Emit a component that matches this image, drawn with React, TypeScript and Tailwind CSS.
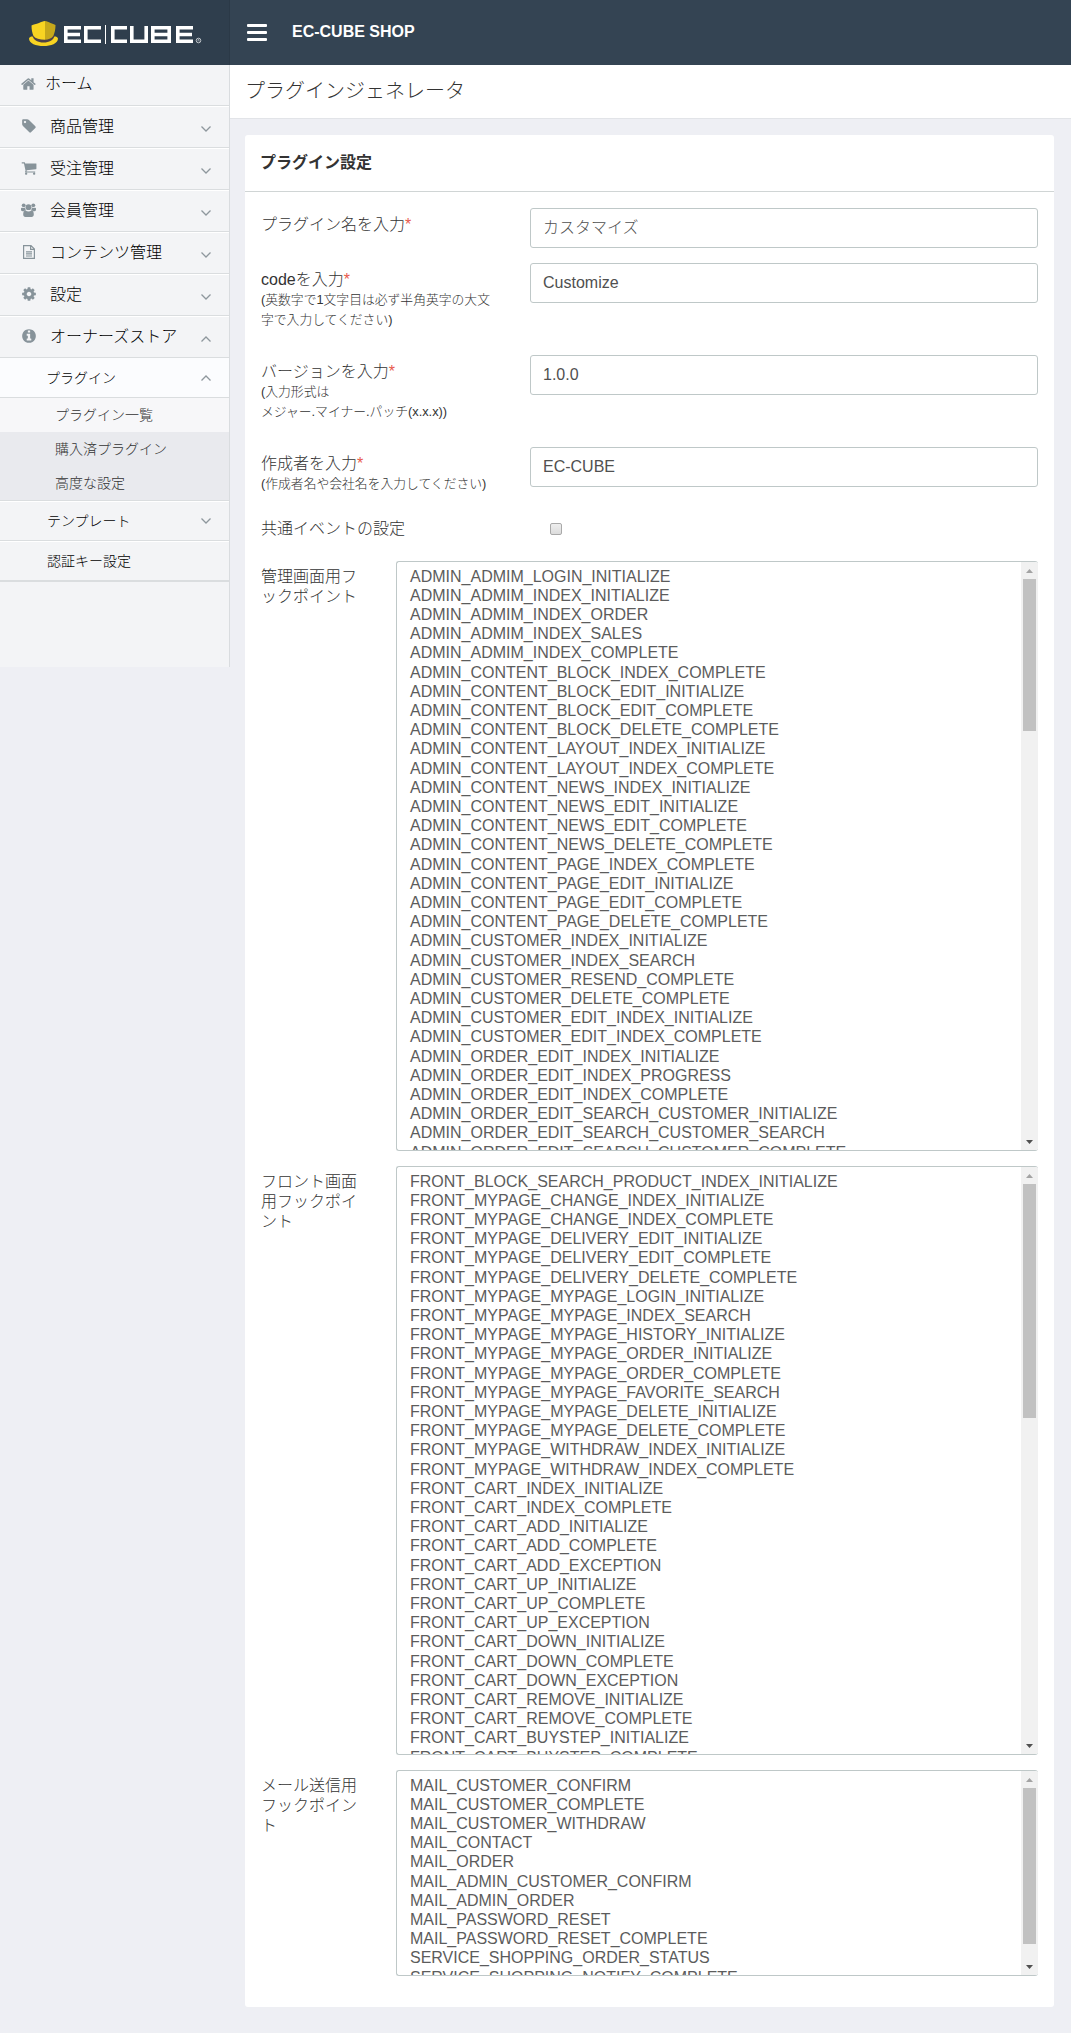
import React from "react";

const ADMIN = `ADMIN_ADMIM_LOGIN_INITIALIZE
ADMIN_ADMIM_INDEX_INITIALIZE
ADMIN_ADMIM_INDEX_ORDER
ADMIN_ADMIM_INDEX_SALES
ADMIN_ADMIM_INDEX_COMPLETE
ADMIN_CONTENT_BLOCK_INDEX_COMPLETE
ADMIN_CONTENT_BLOCK_EDIT_INITIALIZE
ADMIN_CONTENT_BLOCK_EDIT_COMPLETE
ADMIN_CONTENT_BLOCK_DELETE_COMPLETE
ADMIN_CONTENT_LAYOUT_INDEX_INITIALIZE
ADMIN_CONTENT_LAYOUT_INDEX_COMPLETE
ADMIN_CONTENT_NEWS_INDEX_INITIALIZE
ADMIN_CONTENT_NEWS_EDIT_INITIALIZE
ADMIN_CONTENT_NEWS_EDIT_COMPLETE
ADMIN_CONTENT_NEWS_DELETE_COMPLETE
ADMIN_CONTENT_PAGE_INDEX_COMPLETE
ADMIN_CONTENT_PAGE_EDIT_INITIALIZE
ADMIN_CONTENT_PAGE_EDIT_COMPLETE
ADMIN_CONTENT_PAGE_DELETE_COMPLETE
ADMIN_CUSTOMER_INDEX_INITIALIZE
ADMIN_CUSTOMER_INDEX_SEARCH
ADMIN_CUSTOMER_RESEND_COMPLETE
ADMIN_CUSTOMER_DELETE_COMPLETE
ADMIN_CUSTOMER_EDIT_INDEX_INITIALIZE
ADMIN_CUSTOMER_EDIT_INDEX_COMPLETE
ADMIN_ORDER_EDIT_INDEX_INITIALIZE
ADMIN_ORDER_EDIT_INDEX_PROGRESS
ADMIN_ORDER_EDIT_INDEX_COMPLETE
ADMIN_ORDER_EDIT_SEARCH_CUSTOMER_INITIALIZE
ADMIN_ORDER_EDIT_SEARCH_CUSTOMER_SEARCH
ADMIN_ORDER_EDIT_SEARCH_CUSTOMER_COMPLETE`.split("\n");

const FRONT = `FRONT_BLOCK_SEARCH_PRODUCT_INDEX_INITIALIZE
FRONT_MYPAGE_CHANGE_INDEX_INITIALIZE
FRONT_MYPAGE_CHANGE_INDEX_COMPLETE
FRONT_MYPAGE_DELIVERY_EDIT_INITIALIZE
FRONT_MYPAGE_DELIVERY_EDIT_COMPLETE
FRONT_MYPAGE_DELIVERY_DELETE_COMPLETE
FRONT_MYPAGE_MYPAGE_LOGIN_INITIALIZE
FRONT_MYPAGE_MYPAGE_INDEX_SEARCH
FRONT_MYPAGE_MYPAGE_HISTORY_INITIALIZE
FRONT_MYPAGE_MYPAGE_ORDER_INITIALIZE
FRONT_MYPAGE_MYPAGE_ORDER_COMPLETE
FRONT_MYPAGE_MYPAGE_FAVORITE_SEARCH
FRONT_MYPAGE_MYPAGE_DELETE_INITIALIZE
FRONT_MYPAGE_MYPAGE_DELETE_COMPLETE
FRONT_MYPAGE_WITHDRAW_INDEX_INITIALIZE
FRONT_MYPAGE_WITHDRAW_INDEX_COMPLETE
FRONT_CART_INDEX_INITIALIZE
FRONT_CART_INDEX_COMPLETE
FRONT_CART_ADD_INITIALIZE
FRONT_CART_ADD_COMPLETE
FRONT_CART_ADD_EXCEPTION
FRONT_CART_UP_INITIALIZE
FRONT_CART_UP_COMPLETE
FRONT_CART_UP_EXCEPTION
FRONT_CART_DOWN_INITIALIZE
FRONT_CART_DOWN_COMPLETE
FRONT_CART_DOWN_EXCEPTION
FRONT_CART_REMOVE_INITIALIZE
FRONT_CART_REMOVE_COMPLETE
FRONT_CART_BUYSTEP_INITIALIZE
FRONT_CART_BUYSTEP_COMPLETE`.split("\n");

const MAIL = `MAIL_CUSTOMER_CONFIRM
MAIL_CUSTOMER_COMPLETE
MAIL_CUSTOMER_WITHDRAW
MAIL_CONTACT
MAIL_ORDER
MAIL_ADMIN_CUSTOMER_CONFIRM
MAIL_ADMIN_ORDER
MAIL_PASSWORD_RESET
MAIL_PASSWORD_RESET_COMPLETE
SERVICE_SHOPPING_ORDER_STATUS
SERVICE_SHOPPING_NOTIFY_COMPLETE`.split("\n");

const HOME =
  "M1408 992v480q0 26-19 45t-45 19h-384v-384h-256v384h-384q-26 0-45-19t-19-45v-480q0-1 .5-3t.5-3l575-474 575 474q1 2 1 6zm223-69l-62 74q-8 9-21 11h-3q-13 0-21-7l-692-577-692 577q-12 8-24 7-13-2-21-11l-62-74q-8-10-7-23.5t11-21.5l719-599q32-26 76-26t76 26l244 204v-195q0-14 9-23t23-9h192q14 0 23 9t9 23v408l219 182q10 8 11 21.5t-7 23.5z";
const TAG =
  "M576 448q0-53-37.5-90.5t-90.5-37.5-90.5 37.5-37.5 90.5 37.5 90.5 90.5 37.5 90.5-37.5 37.5-90.5zm1067 576q0 53-37 90l-491 492q-39 37-91 37-53 0-90-37l-715-716q-38-37-64.5-101t-26.5-117v-416q0-52 38-90t90-38h416q53 0 117 26.5t102 64.5l715 714q37 39 37 91z";
const CART =
  "M704 1536q0 52-38 90t-90 38-90-38-38-90 38-90 90-38 90 38 38 90zm896 0q0 52-38 90t-90 38-90-38-38-90 38-90 90-38 90 38 38 90zm128-1088v512q0 24-16.5 42.5t-40.5 21.5l-1044 122q13 60 13 70 0 16-24 64h920q26 0 45 19t19 45-19 45-45 19h-1024q-26 0-45-19t-19-45q0-11 8-31.5t16-36 21.5-40 15.5-29.5l-177-823h-204q-26 0-45-19t-19-45 19-45 45-19h256q16 0 28.5 6.5t19.5 15.5 13 24.5 8 26 5.5 29.5 4.5 26h1201q26 0 45 19t19 45z";
const COG =
  "M1152 896q0-106-75-181t-181-75-181 75-75 181 75 181 181 75 181-75 75-181zm512-109v222q0 12-8 23t-20 13l-185 28q-19 54-39 91 35 50 107 138 10 12 10 25t-9 23q-27 37-99 108t-94 71q-12 0-26-9l-138-108q-44 23-91 38-16 136-29 186-7 28-36 28h-222q-14 0-24.5-8.500t-11.500-21.500l-28-184q-49-16-90-37l-141 107q-10 9-25 9-14 0-25-11-126-114-165-168-7-10-7-23 0-12 8-23 15-21 51-66.500t54-70.500q-27-50-41-99l-183-27q-13-2-21-12.500t-8-23.500v-222q0-12 8-23t19-13l186-28q14-46 39-92-40-57-107-138-10-12-10-24 0-10 9-23 26-36 98.500-107.500t94.500-71.500q13 0 26 10l138 107q44-23 91-38 16-136 29-186 7-28 36-28h222q14 0 24.500 8.500t11.500 21.500l28 184q49 16 90 37l142-107q9-9 24-9 13 0 25 10 129 119 165 170 7 8 7 22 0 12-8 23-15 21-51 66.500t-54 70.500q26 50 41 98l183 28q13 2 21 12.500t8 23.500z";
const INFO =
  "M1152 1376v-160q0-14-9-23t-23-9h-96v-512q0-14-9-23t-23-9h-320q-14 0-23 9t-9 23v160q0 14 9 23t23 9h96v320h-96q-14 0-23 9t-9 23v160q0 14 9 23t23 9h448q14 0 23-9t9-23zm-128-896v-160q0-14-9-23t-23-9h-192q-14 0-23 9t-9 23v160q0 14 9 23t23 9h192q14 0 23-9t9-23zm640 416q0 209-103 385.500t-279.500 279.500-385.500 103-385.500-103-279.500-279.500-103-385.500 103-385.500 279.500-279.500 385.500-103 385.500 103 279.500 279.500 103 385.500z";

function Glyph({ d }: { d: string }) {
  return (
    <svg width="16" height="16" viewBox="0 0 1792 1792" fill="currentColor" className="shrink-0">
      <path d={d} />
    </svg>
  );
}

function Logo() {
  return (
    <svg width="174" height="28" viewBox="0 0 174 28" className="shrink-0">
      <path d="M0 18.500C1 16.500 3 16 5 17c5 5 13 5 19 0 2-1 4-.5 5 1.500C29 23.500 22 26 14.500 26S0 23.500 0 18.500z" fill="#f8d422" />
      <path d="M3.500 15.500C4 20 9 22.500 14.500 22.500s10.500-2.500 11-7l-1-1.500H4.500z" fill="#4d4148" />
      <path d="M16 1c-2 0-4 1.200-6 2-3 1-5.500 1.500-7.500 2.500 0 4 .8 7.500 2 10.500 2 2.500 6 3.800 11.500 3.800z" fill="#f8d422" />
      <path d="M16 1c2 0 3.500 1.200 5.500 2 2 .8 3.500 1.200 5 2 0 4-.8 8-2.200 11-2 2.500-5 3.800-8.300 3.800z" fill="#c6a81b" />
      <g fill="none" stroke="#fff" strokeWidth="3.600">
        <path d="M52 7.800H36.800V21.200H52M36.800 14.500H51" />
        <path d="M72 7.800H56.800V21.200H72" />
        <path d="M98 7.800H83.800V21.200H98" />
        <path d="M102.800 6V21.200H117.200V6" />
        <path d="M123.800 6V23M122 7.800H140.200V21.200H122M123.800 14.500H140.200" />
        <path d="M164 7.800H148.800V21.200H164M148.800 14.500H163" />
      </g>
      <path d="M76.500 5V24" stroke="#fff" strokeWidth="1" />
      <circle cx="169.500" cy="20.500" r="2.300" fill="none" stroke="#dfe3e6" strokeWidth=".8" />
      <path d="M169 21.500v-2h1v1l.5 1" fill="none" stroke="#dfe3e6" strokeWidth=".5" />
    </svg>
  );
}

function UsersIcon() {
  return (
    <svg width="15" height="14" viewBox="0 0 15 14" fill="currentColor">
      <circle cx="2.700" cy="2.300" r="1.900" />
      <circle cx="12.300" cy="2.300" r="1.900" />
      <circle cx="7.500" cy="4.200" r="2.900" />
      <path d="M0 5.500C0 4.700.7 4.500 1.500 4.800c1 .4 1.800.3 2.600-.2 0 1 .3 1.900.9 2.600-1 0-1.800.4-2.300 1H1.500C.5 8.200 0 7.500 0 6.800zM15 5.500c0-.8-.7-1-1.500-.7-1 .4-1.800.3-2.600-.2 0 1-.3 1.900-.9 2.600 1 0 1.800.4 2.300 1h1.200c1 0 1.500-.7 1.500-1.400zM2.200 11.500c0-2.300.8-3.900 2.300-3.900 2 1.200 4 1.200 6 0 1.500 0 2.300 1.600 2.300 3.900 0 1.500-.8 2.500-2.200 2.500H4.400c-1.400 0-2.200-1-2.200-2.500z" />
    </svg>
  );
}

function FileIcon() {
  return (
    <svg width="12" height="14" viewBox="0 0 12 14" fill="none" stroke="currentColor" strokeWidth="1.200">
      <path d="M.6.6H8L11.400 4v9.400H.6zM7.600.6v3.800h3.800M3 6.800h6M3 8.900h6M3 11h6" />
    </svg>
  );
}

function Chevron({ up = false }: { up?: boolean }) {
  return (
    <svg width="10" height="6" viewBox="0 0 10 6" fill="none" stroke="#8e979d" strokeWidth="1.300" className={up ? "rotate-180" : ""}>
      <path d="M.5.5L5 5 9.500.5" />
    </svg>
  );
}

type NavProps = { icon: React.ReactNode; label: string; chevron?: "up" | "down" };

function NavItem({ icon, label, chevron }: NavProps) {
  return (
    <li
      className={`flex items-center border-b border-b-[#dadddf] pl-[21px] pr-[18px] text-black ${
        chevron ? "h-[42px] border-t border-t-white" : "h-[41px]"
      }`}
    >
      <span className="-mt-[2px] flex w-[15px] justify-center text-[#87939a]">{icon}</span>
      <span className={chevron ? "-mt-px ml-[14px]" : "-mt-[2px] ml-[9px]"}>{label}</span>
      {chevron && (
        <span className="ml-auto mt-[3px]">
          <Chevron up={chevron === "up"} />
        </span>
      )}
    </li>
  );
}

function Field({ label, note, value, height }: { label: string; note?: React.ReactNode; value: string; height: string }) {
  return (
    <div className={`flex ${height}`}>
      <div className="w-[269px] shrink-0 pt-[7px] leading-[20px]">
        <div>
          {label}
          <span className="text-[#e85a4c]">*</span>
        </div>
        {note && <div className="w-[234px] text-[12.800px] leading-[20px]">{note}</div>}
      </div>
      <div className="flex h-10 flex-1 items-center rounded-[3px] border border-[#bfc8c8] px-3 text-[#505050]">{value}</div>
    </div>
  );
}

function ListBox({ label, items, height, thumb }: { label: string; items: string[]; height: string; thumb: string }) {
  return (
    <div className="mb-[15px] flex">
      <div className="w-[135px] shrink-0 pr-[38px] pt-[6px] leading-[20px]">{label}</div>
      <div className={`flex flex-1 overflow-hidden rounded-[3px] border border-r-0 border-[#bfc8c8] ${height}`}>
        <ul className="flex-1 overflow-hidden pl-[13px] pt-[4.600px] leading-[19.200px] text-[#5c5c5c]">
          {items.map((t) => (
            <li key={t}>{t}</li>
          ))}
        </ul>
        <div className="flex w-[17px] flex-col items-center bg-[#f1f1f1]">
          <span className="flex h-[17px] shrink-0 items-center justify-center">
            <svg width="7" height="4" viewBox="0 0 7 4"><path d="M0 4L3.500 0 7 4z" fill="#a3a3a3" /></svg>
          </span>
          <span className={`w-[13px] shrink-0 bg-[#c1c1c1] ${thumb}`} />
          <span className="mt-auto flex h-[17px] shrink-0 items-center justify-center">
            <svg width="7" height="4" viewBox="0 0 7 4"><path d="M0 0L3.500 4 7 0z" fill="#505050" /></svg>
          </span>
        </div>
      </div>
    </div>
  );
}

export default function App() {
  return (
    <div className="min-h-[2033px] bg-[#eeeff4] font-['Liberation_Sans','Noto_Sans_CJK_JP',sans-serif] text-[16px] font-light leading-[20px] text-[#333]">
      <header className="flex h-[65px] bg-[#344453]">
        <div className="w-[230px] border-r border-[#2b3947] bg-[#2f3e4d] pl-[29px] pt-5">
          <Logo />
        </div>
        <div className="flex flex-1 pl-[17px]">
          <div className="mt-[24px] flex h-[17px] w-5 flex-col justify-between">
            <span className="h-[3px] rounded-[1px] bg-white" />
            <span className="h-[3px] rounded-[1px] bg-white" />
            <span className="h-[3px] rounded-[1px] bg-white" />
          </div>
          <div className="ml-[25px] mt-[22px] font-bold text-white">EC-CUBE SHOP</div>
        </div>
      </header>
      <div className="flex items-start">
        <nav className="h-[602px] w-[230px] shrink-0 border-r border-[#d9dcdf] bg-[#f3f4f6]">
          <ul>
            <NavItem icon={<Glyph d={HOME} />} label="ホーム" />
            <NavItem icon={<Glyph d={TAG} />} label="商品管理" chevron="down" />
            <NavItem icon={<Glyph d={CART} />} label="受注管理" chevron="down" />
            <NavItem icon={<UsersIcon />} label="会員管理" chevron="down" />
            <NavItem icon={<FileIcon />} label="コンテンツ管理" chevron="down" />
            <NavItem icon={<Glyph d={COG} />} label="設定" chevron="down" />
            <NavItem icon={<Glyph d={INFO} />} label="オーナーズストア" chevron="up" />
          </ul>
          <div className="text-[14px] text-black">
            <div className="flex h-10 items-center justify-between border-b border-[#dadddf] bg-[#fbfcfe] pl-[46px] pr-[18px]">
              プラグイン
              <Chevron up />
            </div>
            <ul className="border-b border-[#dadddf] text-[#333]">
              <li className="flex h-[34px] items-center bg-[#f7f7f9] pl-[55px]">プラグイン一覧</li>
              <li className="flex h-[34px] items-center bg-[#e9eaee] pl-[55px]">購入済プラグイン</li>
              <li className="flex h-[34px] items-center bg-[#e9eaee] pl-[55px]">高度な設定</li>
            </ul>
            <div className="flex h-10 items-center justify-between border-t border-b border-t-white border-b-[#dadddf] pl-[47px] pr-[18px]">
              テンプレート
              <Chevron />
            </div>
            <div className="flex h-[41px] items-center border-t border-b-2 border-t-white border-b-[#dadddf] pl-[47px]">認証キー設定</div>
          </div>
        </nav>
        <main className="flex-1">
          <h1 className="flex h-[54px] items-center border-b border-[#e2e4e8] bg-white pb-px pl-[15px] text-[20px]">プラグインジェネレータ</h1>
          <section className="ml-[15px] mr-[17px] mt-4 h-[1872px] rounded-[3px] bg-white">
            <h2 className="flex h-[57px] items-center border-b border-[#d0d5d5] px-[15px] pb-px font-bold">プラグイン設定</h2>
            <div className="px-4 pt-4">
              <Field label="プラグイン名を入力" value="カスタマイズ" height="h-[55px]" />
              <Field label="codeを入力" note="(英数字で1文字目は必ず半角英字の大文字で入力してください)" value="Customize" height="h-[92px]" />
              <Field label="バージョンを入力" note={<>(入力形式は<br />メジャー.マイナー.パッチ(x.x.x))</>} value="1.0.0" height="h-[92px]" />
              <Field label="作成者を入力" note="(作成者名や会社名を入力してください)" value="EC-CUBE" height="h-[71px]" />
              <div className="flex h-[43px]">
                <div className="w-[289px] pt-px">共通イベントの設定</div>
                <span className="mt-[5px] h-[12px] w-[12px] rounded-[2px] border border-[#a9a9a9] bg-linear-to-b from-[#eeeeee] to-[#dcdcdc]" />
              </div>
              <ListBox label="管理画面用フックポイント" items={ADMIN} height="h-[590px]" thumb="h-[152px]" />
              <ListBox label="フロント画面用フックポイント" items={FRONT} height="h-[589px]" thumb="h-[234px]" />
              <ListBox label="メール送信用フックポイント" items={MAIL} height="h-[206px]" thumb="h-[156px]" />
            </div>
          </section>
        </main>
      </div>
    </div>
  );
}
